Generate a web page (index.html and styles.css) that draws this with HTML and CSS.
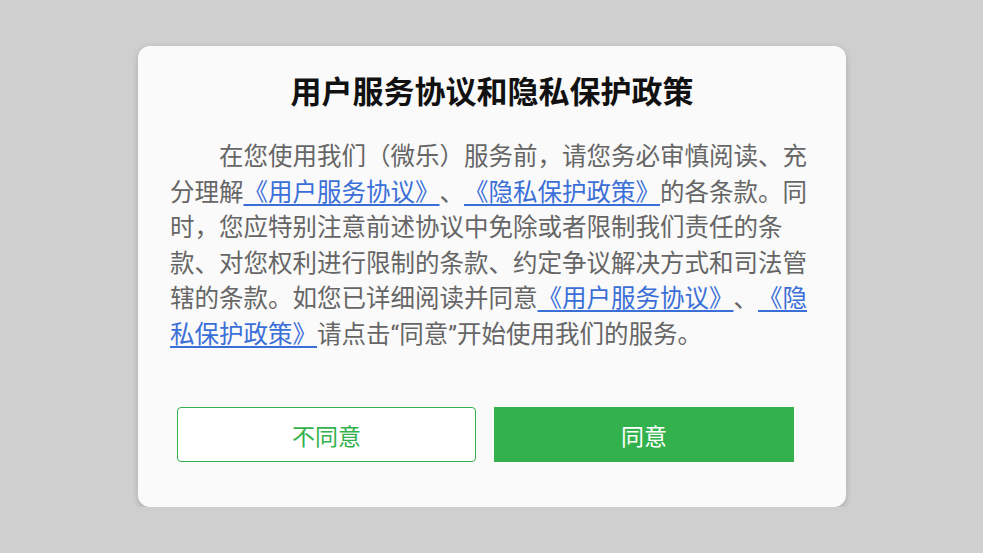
FILE: index.html
```html
<!DOCTYPE html>
<html lang="zh-CN">
<head>
    <meta charset="UTF-8">
    <meta name="viewport" content="width=device-width, initial-scale=1.0">
    <title>用户服务协议和隐私保护政策</title>
    <link rel="stylesheet" href="styles.css">
</head>
<body>
    <div class="dialogo">
        <h1>用户服务协议和隐私保护政策</h1>
        <p class="contenido">在您使用我们（微乐）服务前，请您务必审慎阅读、充分理解<a href="#">《用户服务协议》</a>、<a href="#">《隐私保护政策》</a>的各条款。同时，您应特别注意前述协议中免除或者限制我们责任的条款、对您权利进行限制的条款、约定争议解决方式和司法管辖的条款。如您已详细阅读并同意<a href="#">《用户服务协议》</a>、<a href="#">《隐私保护政策》</a>请点击“同意”开始使用我们的服务。</p>
        <div class="botones">
            <button class="btn btn-no">不同意</button>
            <button class="btn btn-si">同意</button>
        </div>
    </div>
</body>
</html>
```

FILE: styles.css
```css
body {
    font-family: "Roboto", "Noto Sans CJK SC", sans-serif;
    margin: 0;
    padding: 46px 0 0;
    background-color: #cfcfcf;
}
.dialogo {
    width: 708px;
    margin: 0 0 0 138px;
    padding: 27px 0 45px;
    box-sizing: border-box;
    background-color: #fafafa;
    border-radius: 12px;
    box-shadow: 0 2px 6px rgba(0, 0, 0, 0.18);
}
h1 {
    margin: 0;
    text-align: center;
    font-size: 31px;
    line-height: 40px;
    font-weight: bold;
    color: #111;
}
.contenido {
    margin: 26px 38px 0 32px;
    font-size: 24.5px;
    line-height: 35.5px;
    text-indent: 2em;
    text-spacing-trim: space-all;
    color: #666;
}
.contenido a {
    color: #3b6fd8;
    text-decoration: underline;
    text-underline-offset: 3px;
}
.botones {
    display: flex;
    gap: 18px;
    margin-top: 55px;
    padding: 0 0 0 39px;
}
.btn {
    height: 55px;
    font-family: inherit;
    font-size: 23px;
    cursor: pointer;
}
.btn-no {
    width: 299px;
    background-color: #fff;
    color: #33b14d;
    border: 1px solid #33b14d;
    border-radius: 4px;
}
.btn-si {
    width: 300px;
    background-color: #33b14d;
    color: #fff;
    border: none;
    border-radius: 0;
}
```
